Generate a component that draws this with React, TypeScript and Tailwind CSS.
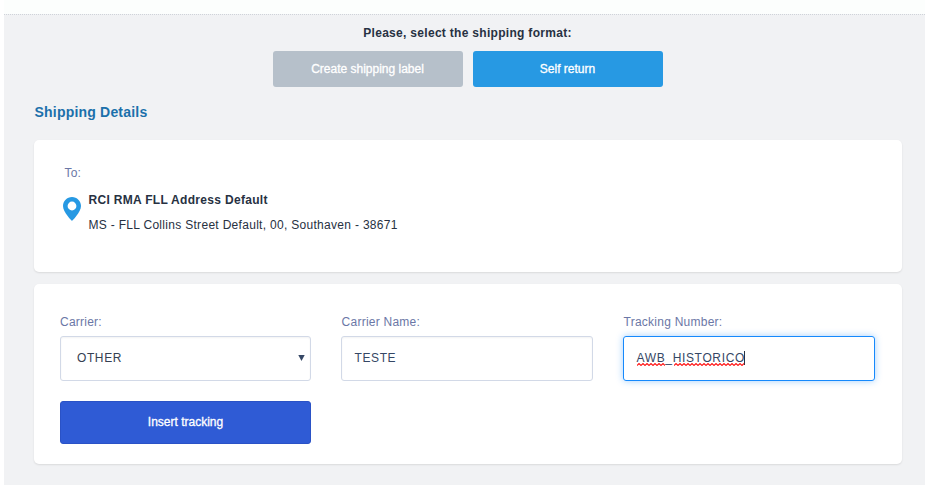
import React from "react";

function Field({ label, children }: { label: string; children: React.ReactNode }) {
  return (
    <div className="group flex flex-col">
      <label className="h-[14px] text-[12px] leading-[14px] tracking-[0.24px] text-[#6b77a6] group-[:not(:first-child)]:pl-[0.6px]">{label}</label>
      <div className="mt-[7px]">{children}</div>
    </div>
  );
}

function Squiggle({ width, className }: { width: number; className: string }) {
  const points = Array.from({ length: Math.floor(width / 2) + 1 }, (_, i) => `${i * 2},${i % 2 ? 0.5 : 2.5}`).join(" ");
  return (
    <svg className={`absolute ${className}`} width={width} height="3" fill="none">
      <polyline points={points} stroke="#ff1a1a" strokeWidth="1.1" />
    </svg>
  );
}

export default function App() {
  return (
    <div className="h-[485px] w-[925px] overflow-hidden bg-white pl-1 font-['Liberation_Sans',Arial,sans-serif]">
      <div className="h-[14px] bg-[#fcfefd]" />
      <main className="flex h-[471px] flex-col border-t border-dotted border-[#cfd3d9] bg-[#f1f2f4] pl-[30px] pr-[23px]">
        <p className="mt-[11px] h-[14px] pr-px text-center text-[12px] font-bold leading-[14px] tracking-[0.3px] text-[#273142]">
          Please, select the shipping format:
        </p>
        <div className="mt-[11px] flex justify-center gap-[10px] text-[12px] text-white">
          <button className="h-9 w-[190px] rounded-[3px] bg-[#b6c0ca] pr-[7px] pl-[6px] [-webkit-text-stroke:0.3px_white]">Create shipping label</button>
          <button className="h-9 w-[190px] rounded-[3px] bg-[#2799e3] pr-[7px] pl-[6px] [-webkit-text-stroke:0.3px_white]">Self return</button>
        </div>
        <h2 className="ml-[0.5px] mt-[17px] h-4 text-[14px] font-bold leading-4 tracking-[0.2px] text-[#1b70ab]">Shipping Details</h2>

        <section className="mt-[20px] h-[132px] rounded-[5px] bg-white pl-[28px] pt-[26px] shadow-[0_1px_2px_rgba(0,0,0,0.1)]">
          <p className="ml-[2.5px] h-[14px] text-[12px] leading-[14px] tracking-[0.2px] text-[#6b77a6]">To:</p>
          <div className="mt-[13px] flex">
            <svg className="mt-[4px]" width="20" height="24" viewBox="0 0 20 24">
              <path fill="#2799e3" fillRule="evenodd" d="M10 0C5 0 1 4 1 9c0 6.2 9 15 9 15s9-8.800 9-15c0-5-4-9-9-9zm0 4.600a4.400 4.400 0 1 1 0 8.800 4.400 4.400 0 0 1 0-8.800z" />
            </svg>
            <div className="ml-[6.5px] text-[12px] text-[#273142]">
              <p className="h-[14px] font-bold leading-[14px] tracking-[0.31px]">RCI RMA FLL Address Default</p>
              <p className="mt-[11px] h-[14px] leading-[14px] tracking-[0.3px]">MS - FLL Collins Street Default, 00, Southaven - 38671</p>
            </div>
          </div>
        </section>

        <section className="mt-[12px] h-[180px] rounded-[5px] bg-white pl-[26px] pt-[31px] shadow-[0_1px_2px_rgba(0,0,0,0.1)]">
          <div className="grid grid-cols-[251px_252px_252px] gap-[30px]">
            <Field label="Carrier:">
              <div className="flex h-[45px] items-center justify-between rounded-[3px] border border-[#d2d9e7] pb-[2px] pl-4 pr-[5px] text-[12px] tracking-[0.6px] text-[#354052] shadow-[inset_0_1px_2px_rgba(0,0,0,0.05)]">
                <span>OTHER</span>
                <svg width="7" height="6"><path d="M0.300 0h6.400L3.500 6z" fill="#354765" /></svg>
              </div>
            </Field>
            <Field label="Carrier Name:">
              <div className="flex h-[45px] items-center rounded-[3px] border border-[#d2d9e7] pb-[2px] pl-[12.5px] text-[12px] tracking-[0.6px] text-[#354765] shadow-[inset_0_1px_2px_rgba(0,0,0,0.05)]">TESTE</div>
            </Field>
            <Field label="Tracking Number:">
              <div className="flex h-[45px] items-center rounded-[3px] border border-[#1689fc] pb-[2px] pl-[12.5px] text-[12px] tracking-[0.65px] text-[#354765] shadow-[0_0_7px_rgba(22,137,252,0.4)]">
                <span className="relative">
                  AWB_HISTORICO
                  <Squiggle width={28} className="left-0 top-[14px]" />
                  <Squiggle width={71} className="left-[37px] top-[14px]" />
                </span>
                <span className="-ml-px h-[14px] w-px bg-[#273142]" />
              </div>
            </Field>
          </div>
          <button className="mt-5 h-[43px] w-[251px] rounded-[3px] border border-[#2a52c6] bg-[#2f5bd5] pb-[2px] text-[12px] text-white [-webkit-text-stroke:0.3px_white]">
            Insert tracking
          </button>
        </section>
      </main>
    </div>
  );
}
